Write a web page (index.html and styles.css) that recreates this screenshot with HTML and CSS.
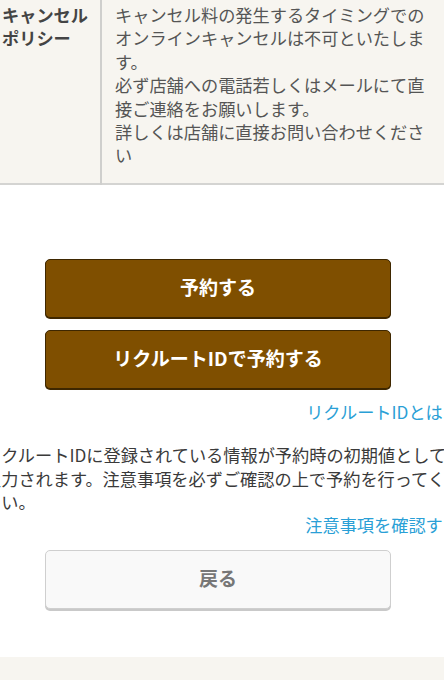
FILE: index.html
```html
<!DOCTYPE html>
<html lang="ja">
<head>
    <meta charset="UTF-8">
    <meta name="viewport" content="width=device-width, initial-scale=1.0">
    <title>予約内容の確認</title>
    <link rel="stylesheet" href="styles.css">
</head>
<body>
    <div class="page">
        <!-- ポリシー表 -->
        <table class="info-table">
            <tr>
                <th>キャンセル<br>ポリシー</th>
                <td>
                    <div class="cell-text">キャンセル料の発生するタイミングでのオンラインキャンセルは不可といたします。<br>必ず店舗への電話若しくはメールにて直接ご連絡をお願いします。<br>詳しくは店舗に直接お問い合わせください</div>
                </td>
            </tr>
        </table>

        <div class="actions">
            <button class="btn btn-primary">予約する</button>
            <button class="btn btn-primary">リクルートIDで予約する</button>

            <p class="link-line"><a href="#">リクルートIDとは？</a></p>
            <p class="note">リクルートIDに登録されている情報が予約時の初期値として<br>入力されます。注意事項を必ずご確認の上で予約を行ってください。</p>
            <p class="link-line"><a href="#">注意事項を確認する</a></p>

            <button class="btn btn-back">戻る</button>
        </div>
    </div>

    <footer class="footer"></footer>
</body>
</html>
```

FILE: styles.css
```css
/* 全体 */
html, body {
    overflow-x: hidden;
}
body {
    margin: 0;
    background-color: #fff;
    font-family: "Noto Sans CJK JP", "Noto Sans", sans-serif;
    font-size: 17.2px;
    line-height: 23.4px;
    color: #3a3a3a;
}
.page {
    margin-left: -16px;
    width: 476px;
}

/* ポリシー表 */
.info-table {
    width: 476px;
    margin-top: -13px;
    border-collapse: collapse;
    background-color: #f7f5f0;
    border-bottom: 2px solid #d4d4d2;
}
.info-table th,
.info-table td {
    padding: 16px 0;
    vertical-align: top;
    text-align: left;
}
.info-table th {
    width: 88px;
    padding-left: 18px;
    padding-right: 10px;
    border-right: 2px solid #cfcfcd;
    font-weight: bold;
    color: #444;
}
.info-table td {
    padding-left: 13px;
    color: #555;
}
.cell-text {
    width: 312px;
}

/* ボタン */
.actions {
    padding-top: 74px;
}
.btn {
    display: block;
    width: 346px;
    height: 59px;
    margin: 0 0 12px 61px;
    padding: 0 0 3px;
    border-radius: 5px;
    font-family: inherit;
    font-size: 19px;
    font-weight: bold;
    cursor: pointer;
}
.btn-primary {
    background-color: #7f4f00;
    color: #fff;
    border: 1px solid #3e2700;
    box-shadow: 0 1px 0 #3e2700;
}
.btn-back {
    margin-top: 13px;
    margin-bottom: 0;
    background-color: #f9f9f9;
    color: #777;
    border: 1px solid #cfcfcf;
    box-shadow: 0 2px 0 #c9c9c9;
}

/* リンクと注意書き */
.link-line {
    margin: 0;
    text-align: right;
}
.link-line a {
    color: #2a9fd6;
    text-decoration: none;
}
.actions .btn-primary + .btn-primary {
    margin-bottom: 11px;
}
.note {
    width: 485px;
    margin: 20px 0 0 0;
    color: #3a3a3a;
}

/* フッター */
.footer {
    margin-top: 48px;
    height: 60px;
    background-color: #f7f5f0;
}
```
